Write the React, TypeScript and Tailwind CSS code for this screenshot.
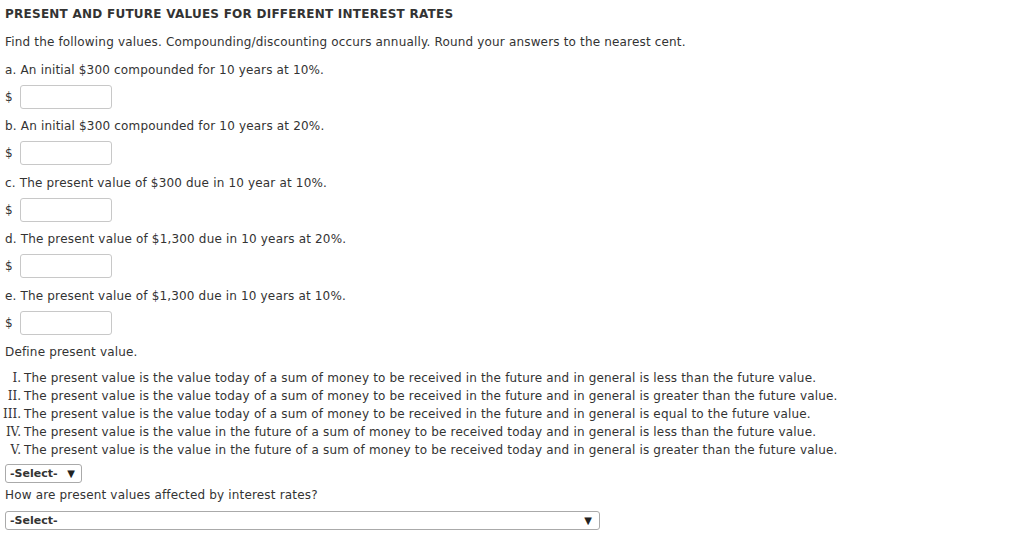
import React from 'react';

const parts = [
  ['a. An initial $300 compounded for 10 years at 10%.', 'mt-[10px]'],
  ['b. An initial $300 compounded for 10 years at 20%.', 'mt-[8px]'],
  ['c. The present value of $300 due in 10 year at 10%.', 'mt-[9px]'],
  ['d. The present value of $1,300 due in 10 years at 20%.', 'mt-[8px]'],
  ['e. The present value of $1,300 due in 10 years at 10%.', 'mt-[9px]'],
];

const options = [
  ['I.', 'The present value is the value today of a sum of money to be received in the future and in general is less than the future value.'],
  ['II.', 'The present value is the value today of a sum of money to be received in the future and in general is greater than the future value.'],
  ['III.', 'The present value is the value today of a sum of money to be received in the future and in general is equal to the future value.'],
  ['IV.', 'The present value is the value in the future of a sum of money to be received today and in general is less than the future value.'],
  ['V.', 'The present value is the value in the future of a sum of money to be received today and in general is greater than the future value.'],
];

export default function App() {
  return (
    <div className="w-[1024px] h-[551px] bg-white text-[#333] text-[12px] leading-[18px] tracking-[0.17px] font-['DejaVu_Sans',Verdana,sans-serif] pl-[5px] pt-[5px]">
      <h1 className="font-bold text-[12px] leading-[18px] tracking-[0.25px]">PRESENT AND FUTURE VALUES FOR DIFFERENT INTEREST RATES</h1>
      <p className="mt-[10px]">Find the following values. Compounding/discounting occurs annually. Round your answers to the nearest cent.</p>

      {parts.map(([p, mt]) => (
        <div key={p}>
          <p className={mt}>{p}</p>
          <div className="flex items-center mt-[6px]">
            <span className="w-[15px]">$</span>
            <div className="w-[92px] h-[24px] border border-[#c8c8c8] rounded-[3px]" />
          </div>
        </div>
      ))}

      <p className="mt-[8px]">Define present value.</p>
      <div className="mt-[8px] -ml-[5px]">
        {options.map(([n, t]) => (
          <div key={n} className="flex">
            <span className="w-[21px] text-right font-['DejaVu_Serif',serif] text-[12px] tracking-normal">{n}</span>
            <span className="ml-[3px]">{t}</span>
          </div>
        ))}
      </div>

      <div className="mt-[5px] w-[77px] h-[19px] border border-[#aaa] rounded-[3px] flex items-center justify-between px-[4px] text-[11px] font-bold tracking-normal">
        <span>-Select-</span>
        <span className="text-[10px] pr-[2px] text-[#222]">▼</span>
      </div>
      <p className="mt-[3px]">How are present values affected by interest rates?</p>
      <div className="mt-[7px] w-[595px] h-[19px] border border-[#aaa] rounded-[3px] flex items-center justify-between px-[4px] text-[11px] font-bold tracking-normal">
        <span>-Select-</span>
        <span className="text-[10px] pr-[3px] text-[#222]">▼</span>
      </div>
    </div>
  );
}
